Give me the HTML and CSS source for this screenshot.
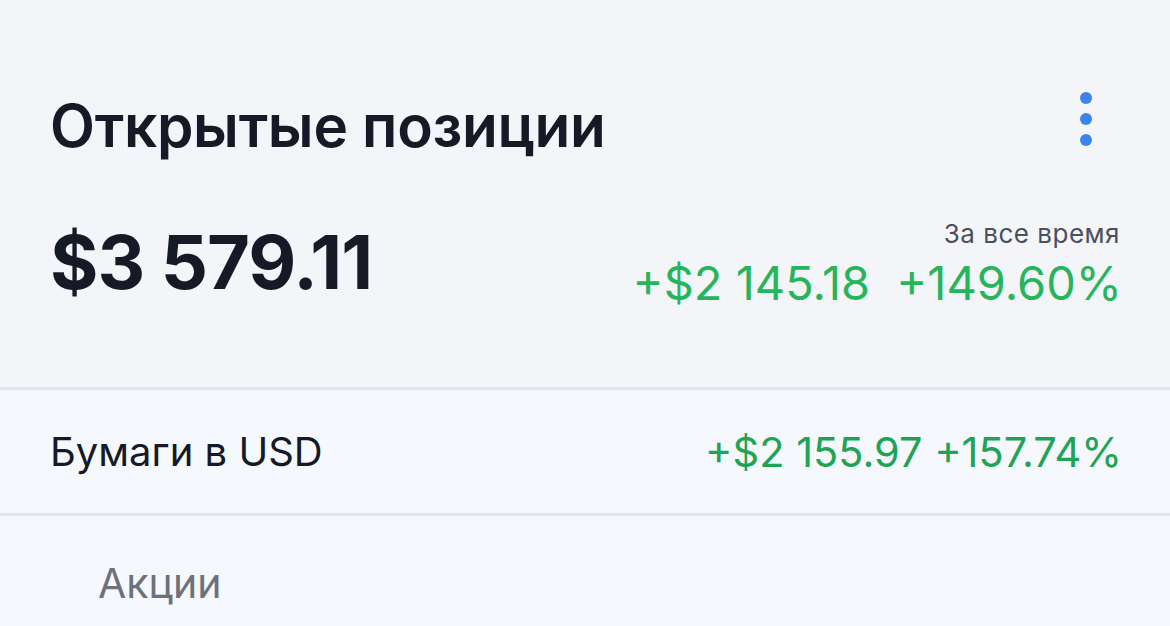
FILE: index.html
```html
<!DOCTYPE html>
<html lang="ru">
<head>
    <meta charset="UTF-8">
    <meta name="viewport" content="width=device-width, initial-scale=1.0">
    <title>Открытые позиции</title>
    <link rel="stylesheet" href="styles.css">
</head>
<body>

<div class="summary">
    <div class="summary-head">
        <h1 class="title">Открытые позиции</h1>
        <div class="more-btn">
            <span class="dot"></span>
            <span class="dot"></span>
            <span class="dot"></span>
        </div>
    </div>

    <div class="summary-body">
        <div class="total">$3 579.11</div>
        <div class="profit">
            <div class="profit-label">За все время</div>
            <div class="profit-value">
                <span>+$2 145.18</span>
                <span>+149.60%</span>
            </div>
        </div>
    </div>
</div>

<!-- Currency group -->
<div class="group-row">
    <span class="group-name">Бумаги в USD</span>
    <span class="group-profit">+$2 155.97 +157.74%</span>
</div>

<div class="section-row">
    <span class="section-name">Акции</span>
</div>

</body>
</html>
```

FILE: styles.css
```css
body {
    margin: 0;
    font-family: Inter, "Noto Sans", sans-serif;
    background: #f5f8fc;
    color: #151a26;
}

.summary {
    background: #f3f5f9;
    padding: 90px 48px 0 50px;
    height: 297px;
    border-bottom: 3px solid #e2e4e8;
}

.summary-head {
    display: flex;
    justify-content: space-between;
    align-items: center;
}

.title {
    margin: 0;
    font-size: 58.5px;
    font-weight: 600;
    line-height: 72px;
    letter-spacing: -0.3px;
}

.more-btn {
    display: flex;
    flex-direction: column;
    gap: 9px;
    margin-right: 30px;
    margin-top: -14px;
}

.dot {
    width: 12px;
    height: 12px;
    border-radius: 50%;
    background: #3b84ee;
}

.summary-body {
    display: flex;
    justify-content: space-between;
    align-items: flex-start;
    margin-top: 56px;
}

.total {
    font-size: 74px;
    font-weight: 700;
    line-height: 80px;
    margin-top: 4px;
    letter-spacing: -1px;
}

.profit {
    text-align: right;
}

.profit-label {
    font-size: 26px;
    color: #4b505b;
    line-height: 32px;
    letter-spacing: 0.5px;
    margin-right: 2px;
}

.profit-value {
    display: flex;
    gap: 26px;
    font-size: 47px;
    line-height: 60px;
    margin-top: 3px;
    color: #27b55c;
}

.group-row {
    display: flex;
    justify-content: space-between;
    align-items: center;
    height: 123px;
    padding: 0 48px 0 50px;
    border-bottom: 3px solid #e2e4e8;
}

.group-name {
    font-size: 40px;
}

.group-profit {
    font-size: 41.5px;
    color: #1fa355;
}

.section-row {
    height: 134px;
    padding: 0 0 0 98px;
    display: flex;
    align-items: center;
}

.section-name {
    font-size: 41px;
    color: #6c717b;
}
```
